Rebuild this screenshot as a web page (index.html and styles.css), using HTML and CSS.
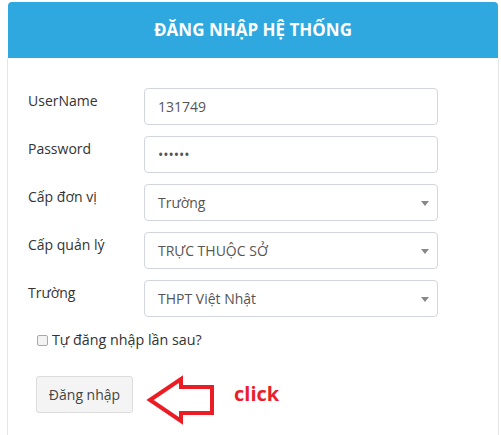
FILE: index.html
```html
<!DOCTYPE html>
<html lang="vi">
<head>
  <meta charset="UTF-8" />
  <meta name="viewport" content="width=device-width, initial-scale=1.0"/>
  <title>Đăng nhập hệ thống</title>
  <link rel="stylesheet" href="styles.css">
</head>
<body>
  <div class="panel">
    <div class="panel-heading">ĐĂNG NHẬP HỆ THỐNG</div>

    <form class="panel-body">
      <div class="rows">
        <div class="form-row">
          <label for="user">UserName</label>
          <input id="user" class="field" type="text" value="131749">
        </div>
        <div class="form-row">
          <label for="pass">Password</label>
          <input id="pass" class="field" type="password" value="123456">
        </div>
        <div class="form-row">
          <label for="donvi">Cấp đơn vị</label>
          <div class="select-wrap">
            <select id="donvi" class="field">
              <option>Trường</option>
            </select>
          </div>
        </div>
        <div class="form-row">
          <label for="quanly">Cấp quản lý</label>
          <div class="select-wrap">
            <select id="quanly" class="field">
              <option>TRỰC THUỘC SỞ</option>
            </select>
          </div>
        </div>
        <div class="form-row">
          <label for="truong">Trường</label>
          <div class="select-wrap">
            <select id="truong" class="field">
              <option>THPT Việt Nhật</option>
            </select>
          </div>
        </div>
      </div>

      <label class="remember">
        <input type="checkbox" class="check">
        <span>Tự đăng nhập lần sau?</span>
      </label>

      <div class="actions">
        <button type="button" class="btn">Đăng nhập</button>
        <svg class="arrow" width="70" height="50" viewBox="0 0 70 50">
          <polygon points="4,25 35,4 35,12 66,12 66,38 35,38 35,46" fill="none" stroke="#ec1c24" stroke-width="4"/>
        </svg>
        <span class="hint">click</span>
      </div>
    </form>
  </div>
</body>
</html>
```

FILE: styles.css
```css
* {
  box-sizing: border-box;
}
html, body {
  margin: 0;
  padding: 0;
  background: #fff;
  overflow: hidden;
  font-family: "Open Sans", Arial, sans-serif;
  font-size: 14px;
  color: #333;
}

.panel {
  margin: 2px 2px 0 7px;
}

.panel-heading {
  margin: 0 1px;
  height: 56px;
  background: #2ea8df;
  border-radius: 4px 4px 0 0;
  display: flex;
  align-items: center;
  justify-content: center;
  color: #fff;
  font-size: 17px;
  font-weight: bold;
  padding-bottom: 1px;
}

.panel-body {
  border-left: 1px solid #e6e6e6;
  border-right: 1px solid #e6e6e6;
  padding: 30px 60px 20px 20px;
}

.rows {
  display: flex;
  flex-direction: column;
  gap: 11px;
}

.form-row {
  display: grid;
  grid-template-columns: 116px 1fr;
}

.form-row label {
  padding-top: 3px;
  line-height: 20px;
}

.field {
  width: 100%;
  height: 37px;
  border: 1px solid #d2d6de;
  border-radius: 4px;
  padding: 0 13px;
  font-family: inherit;
  font-size: 14px;
  color: #555;
  background: #fff;
  outline: none;
}

.select-wrap {
  position: relative;
}
.select-wrap select {
  appearance: none;
  -webkit-appearance: none;
}
.select-wrap::after {
  content: "";
  position: absolute;
  right: 9px;
  top: 17px;
  border-left: 4px solid transparent;
  border-right: 4px solid transparent;
  border-top: 5px solid #888;
  pointer-events: none;
}

.remember {
  display: flex;
  align-items: center;
  gap: 4px;
  margin: 13px 0 0 9px;
  line-height: 20px;
  font-size: 14.3px;
}

.check {
  appearance: none;
  -webkit-appearance: none;
  margin: 0;
  width: 11px;
  height: 11px;
  border: 1px solid #a9a9a9;
  border-radius: 2px;
  background: #f3f3f3;
}

.actions {
  display: flex;
  align-items: flex-start;
  margin: 26px 0 0 8px;
}

.btn {
  width: 97px;
  height: 37px;
  background: #f4f4f4;
  border: 1px solid #dcdcdc;
  border-radius: 3px;
  font-family: inherit;
  font-size: 14px;
  color: #444;
}

.arrow {
  margin: -1px 0 0 13px;
}

.hint {
  margin: 6px 0 0 18px;
  color: #e8202a;
  font-size: 20px;
  font-weight: bold;
  line-height: 24px;
}
```
